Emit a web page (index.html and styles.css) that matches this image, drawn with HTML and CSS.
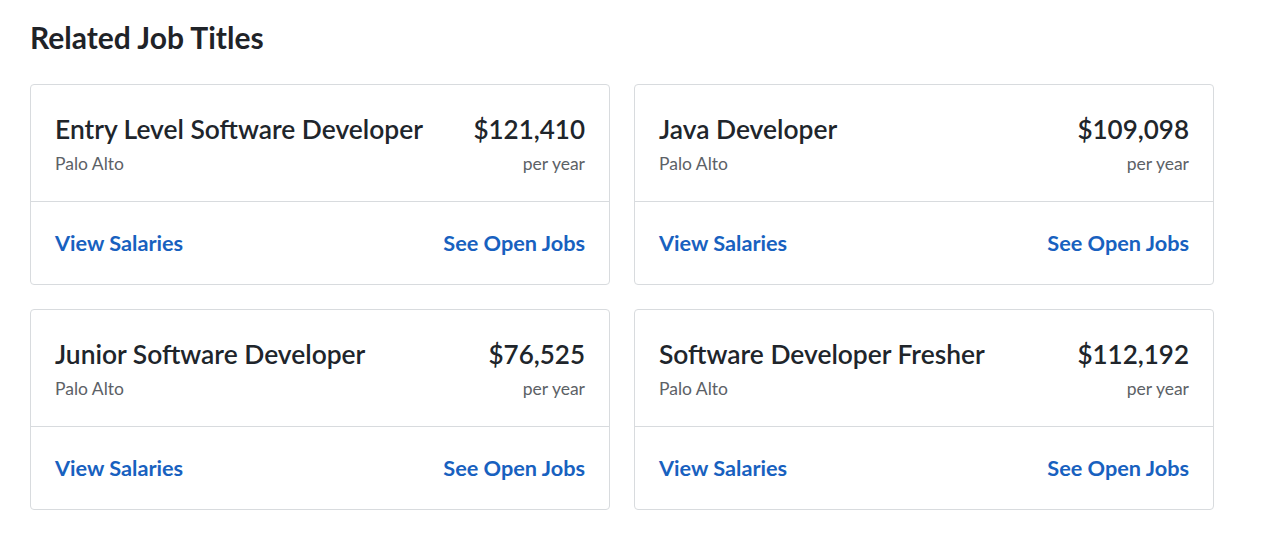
FILE: index.html
```html
<!DOCTYPE html>
<html>
<head>
<meta charset="utf-8">
<link rel="stylesheet" href="styles.css">
</head>
<body>
<section class="related">
  <h2 class="heading">Related Job Titles</h2>
  <div class="grid">
    <div class="card">
      <div class="card-top">
        <div class="row"><span class="title">Entry Level Software Developer</span><span class="pay">$121,410</span></div>
        <div class="row sub"><span class="loc">Palo Alto</span><span class="per">per year</span></div>
      </div>
      <div class="card-bottom"><a class="link">View Salaries</a><a class="link">See Open Jobs</a></div>
    </div>
    <div class="card">
      <div class="card-top">
        <div class="row"><span class="title">Java Developer</span><span class="pay">$109,098</span></div>
        <div class="row sub"><span class="loc">Palo Alto</span><span class="per">per year</span></div>
      </div>
      <div class="card-bottom"><a class="link">View Salaries</a><a class="link">See Open Jobs</a></div>
    </div>
    <div class="card">
      <div class="card-top">
        <div class="row"><span class="title">Junior Software Developer</span><span class="pay">$76,525</span></div>
        <div class="row sub"><span class="loc">Palo Alto</span><span class="per">per year</span></div>
      </div>
      <div class="card-bottom"><a class="link">View Salaries</a><a class="link">See Open Jobs</a></div>
    </div>
    <div class="card">
      <div class="card-top">
        <div class="row"><span class="title">Software Developer Fresher</span><span class="pay">$112,192</span></div>
        <div class="row sub"><span class="loc">Palo Alto</span><span class="per">per year</span></div>
      </div>
      <div class="card-bottom"><a class="link">View Salaries</a><a class="link">See Open Jobs</a></div>
    </div>
  </div>
</section>
</body>
</html>
```
FILE: styles.css
```css
html, body {
  margin: 0;
  padding: 0;
  background: #ffffff;
}
body {
  font-family: Lato, "Open Sans", sans-serif;
  color: #20252b;
}
.related {
  padding: 18px 66px 0 30px;
}
.heading {
  margin: 0 0 28px 0;
  font-size: 30px;
  line-height: 38px;
  font-weight: 700;
  color: #1f2328;
}
.grid {
  display: grid;
  grid-template-columns: 580px 580px;
  gap: 24px;
}
.card {
  border: 1px solid #d8dbde;
  border-radius: 4px;
  background: #fff;
}
.card-top {
  padding: 24px 24px 23px 24px;
  border-bottom: 1px solid #d8dbde;
}
.row {
  display: flex;
  justify-content: space-between;
  align-items: baseline;
}
.row.sub {
  padding-top: 1px;
}
.title, .pay {
  font-size: 26px;
  line-height: 40px;
  font-weight: 600;
  color: #20252b;
}
.title {
  font-size: 26.4px;
}
.loc, .per {
  font-size: 17.5px;
  line-height: 28px;
  color: #5c6166;
}
.card-bottom {
  padding: 24px;
  display: flex;
  justify-content: space-between;
}
.link {
  font-size: 21.7px;
  line-height: 34px;
  font-weight: 700;
  color: #1861bf;
  text-decoration: none;
}
```
